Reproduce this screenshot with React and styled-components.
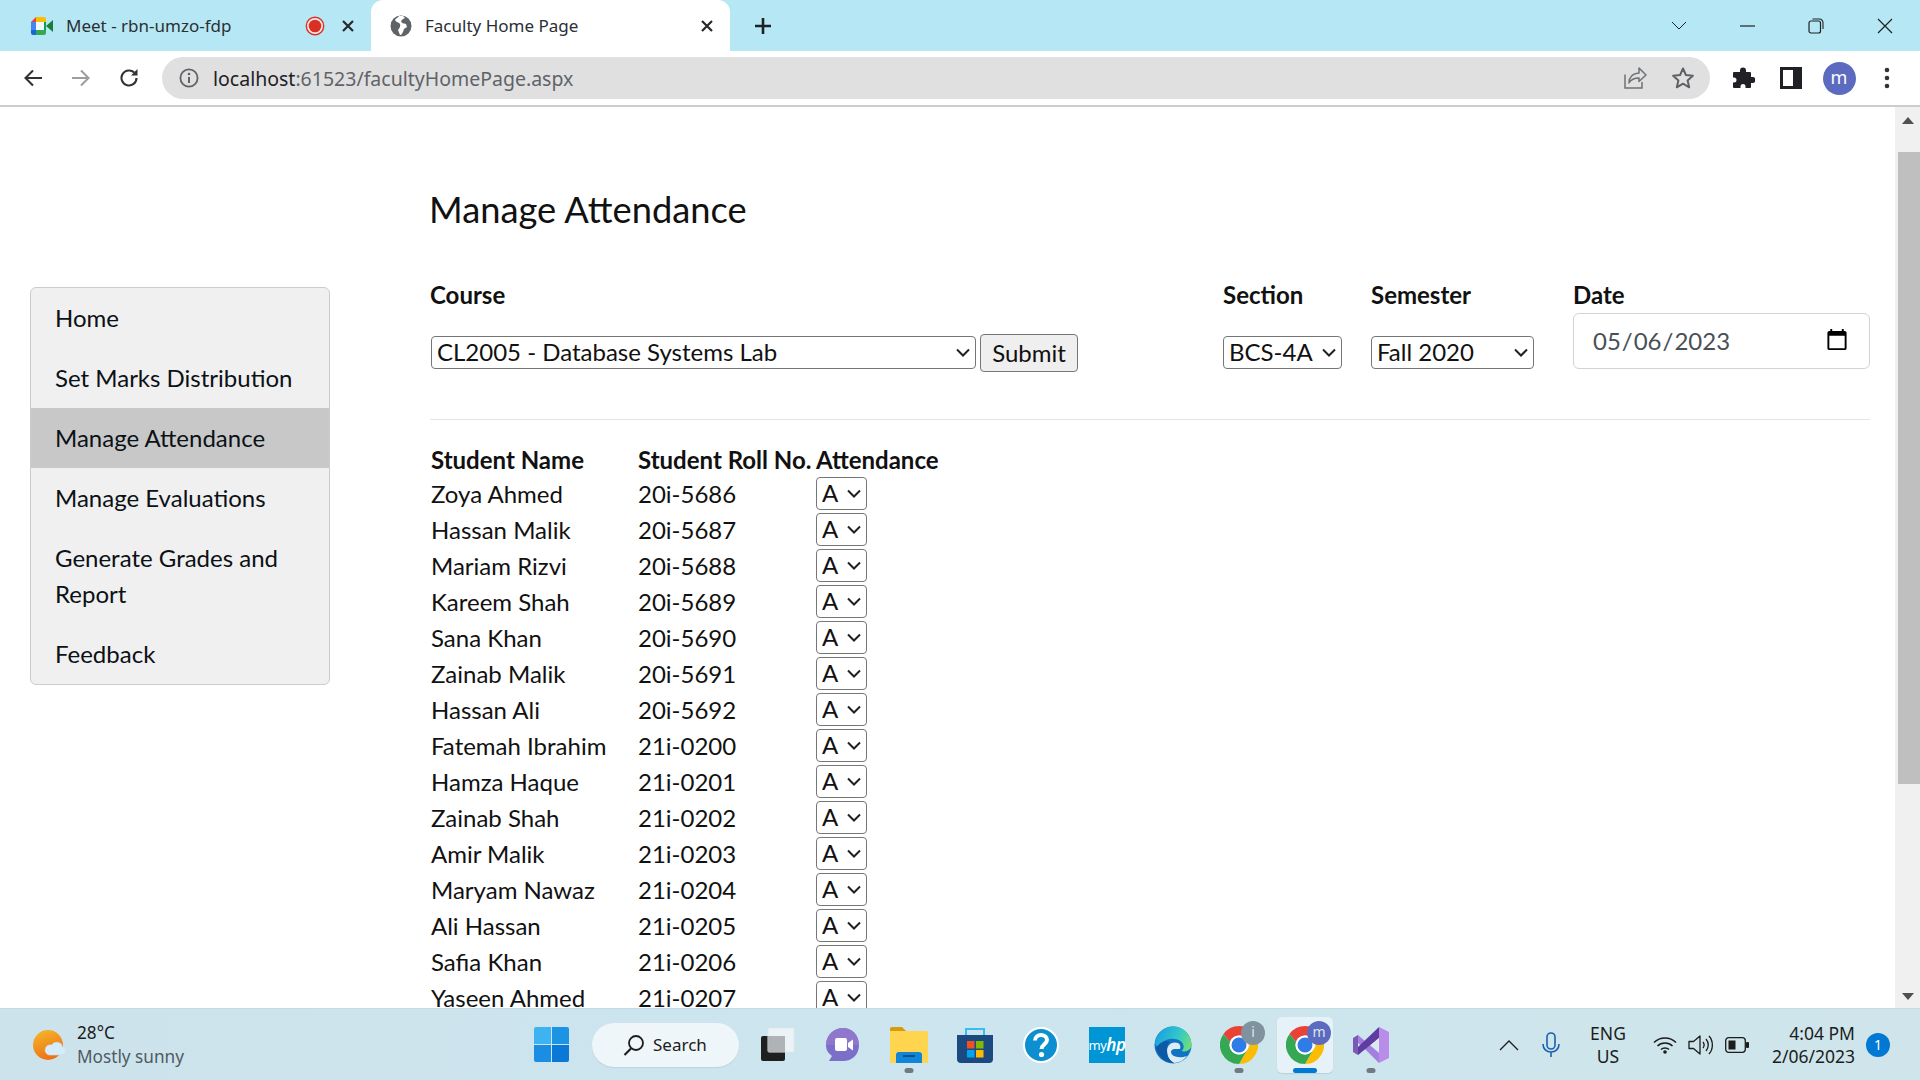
import React from "react";
import styled, { createGlobalStyle } from "styled-components";

const GlobalStyle = createGlobalStyle`
  html, body { margin: 0; padding: 0; height: 100%; overflow: hidden; background: #fff; }
  #root { height: 100%; }
  * { box-sizing: border-box; }
`;

const uiFont = `"Noto Sans", "Open Sans", sans-serif`;
const selectArrow = `url("data:image/svg+xml,%3Csvg xmlns='http://www.w3.org/2000/svg' width='14' height='9'%3E%3Cpath d='M1 1.500l6 6 6-6' fill='none' stroke='%23202124' stroke-width='2'/%3E%3C/svg%3E")`;

const Screen = styled.div`
  height: 100vh;
  display: flex;
  flex-direction: column;
  font-family: Lato, sans-serif;
  color: #111;
`;

/* browser chrome */
const TabStrip = styled.div`
  height: 51px;
  flex: none;
  display: flex;
  align-items: stretch;
  background: #b5e8f4;
  font-family: ${uiFont};
`;
const Tab = styled.div`
  width: ${p => p.$width}px;
  display: flex;
  align-items: center;
  padding: 0 16px 0 ${p => p.$left}px;
  border-radius: 12px 12px 0 0;
  background: ${p => (p.$active ? "#fff" : "transparent")};
  font-size: 17px;
  color: #2b2f33;
`;
const TabTitle = styled.span`
  margin-left: 13px;
  flex: 1;
`;
const RecordSlot = styled.span`
  display: flex;
  margin-right: 16px;
`;
const NewTab = styled.div`
  width: 66px;
  display: flex;
  align-items: center;
  justify-content: center;
`;
const WindowControls = styled.div`
  margin-left: auto;
  display: flex;
  align-items: center;
  padding-right: 1px;
`;
const WindowButton = styled.div`
  width: 68.5px;
  display: flex;
  justify-content: center;
`;
const Toolbar = styled.div`
  height: 56px;
  flex: none;
  display: flex;
  align-items: center;
  background: #fff;
  border-bottom: 2px solid #cdcdcd;
`;
const NavButton = styled.div`
  width: 48px;
  display: flex;
  justify-content: center;
  &:first-child { margin-left: 9px; }
`;
const AddressBar = styled.div`
  width: 1548px;
  height: 42px;
  margin-left: 9px;
  padding: 0 3px 0 17px;
  display: flex;
  align-items: center;
  border-radius: 21px;
  background: #e0e0e0;
  font-family: ${uiFont};
  font-size: 19.5px;
`;
const Host = styled.span`
  margin-left: 14px;
  color: #202124;
`;
const Path = styled.span`
  color: #5f6368;
  flex: 1;
`;
const BarIcon = styled.div`
  width: 48px;
  display: flex;
  justify-content: center;
`;
const ExtraIcons = styled.div`
  display: flex;
  align-items: center;
  margin-left: 9px;
`;
const Avatar = styled.div`
  width: 33px;
  height: 33px;
  border-radius: 50%;
  background: #5c6bc0;
  color: #fff;
  font-family: ${uiFont};
  font-size: 18px;
  line-height: 30px;
  text-align: center;
`;

/* page */
const Viewport = styled.div`
  flex: 1;
  min-height: 0;
  display: flex;
`;
const Page = styled.div`
  flex: 1;
  min-width: 0;
  overflow: hidden;
  display: flex;
  padding: 0 25px 0 30px;
  font-size: 24px;
`;
const Sidebar = styled.ul`
  width: 300px;
  flex: none;
  align-self: flex-start;
  margin: 180px 100px 0 0;
  padding: 0;
  list-style: none;
  background: #f0f0f0;
  border: 1px solid #ccc;
  border-radius: 6px;
  overflow: hidden;
`;
const NavItem = styled.li`
  padding: 12px 24px;
  line-height: 36px;
  background: ${p => (p.$active ? "#c8c8c8" : "transparent")};
  color: #0c1116;
`;
const Content = styled.main`
  flex: 1;
  min-width: 0;
`;
const Title = styled.h1`
  margin: 0 0 0 -1px;
  padding-top: 81px;
  height: 170px;
  font-size: 36.3px;
  line-height: 42px;
  font-weight: 400;
`;
const FilterRow = styled.div`
  display: grid;
  grid-template-columns: 793px 148px 202px 297px;
  padding-bottom: 47px;
  border-bottom: 1px solid #e4e4e4;
`;
const Field = styled.div`
  height: 95px;
  display: flex;
  flex-direction: column;
  justify-content: space-between;
`;
const FieldLabel = styled.label`
  font-weight: 700;
  line-height: 36px;
`;
const CourseControls = styled.div`
  display: flex;
  align-items: center;
  gap: 4px;
  margin-left: 1px;
`;
const Select = styled.select`
  width: ${p => p.$width}px;
  height: 33px;
  padding: 0 0 2px 5px;
  appearance: none;
  font-family: Lato, sans-serif;
  font-size: 24px;
  color: #111;
  background: #fff ${selectArrow} no-repeat right 5px center;
  border: 1px solid #767676;
  border-radius: 4px;
  margin-bottom: ${p => p.$lift || 0}px;
`;
const SubmitButton = styled.button`
  width: 98px;
  height: 38px;
  padding: 0 0 2px;
  font-family: Lato, sans-serif;
  font-size: 24px;
  color: #111;
  background: #efefef;
  border: 1px solid #767676;
  border-radius: 4px;
`;
const DateInput = styled.input`
  width: 297px;
  height: 57px;
  margin-bottom: 3px;
  padding: 0 18px 2px;
  font-family: Lato, sans-serif;
  font-size: 24px;
  color: #495057;
  background: #fff;
  border: 1px solid #ced4da;
  border-radius: 6px;
`;
const RollTable = styled.div`
  padding-top: 23px;
`;
const RollRow = styled.div`
  display: grid;
  grid-template-columns: 207px 178px 1fr;
  align-items: center;
  height: ${p => (p.$head ? "32px" : "36px")};
  padding-left: 1px;
  font-weight: ${p => (p.$head ? 700 : 400)};
  white-space: nowrap;
`;
const Scrollbar = styled.div`
  width: 25px;
  flex: none;
  display: flex;
  flex-direction: column;
  align-items: flex-end;
  background: #f0f0f0;
`;
const ScrollArrow = styled.div`
  width: 100%;
  height: ${p => (p.$down ? "24px" : "45px")};
  margin-top: ${p => (p.$down ? "auto" : "0")};
  padding-top: ${p => (p.$down ? "0" : "10px")};
  display: flex;
  justify-content: center;
  align-items: ${p => (p.$down ? "center" : "flex-start")};
`;
const ScrollThumb = styled.div`
  width: 22px;
  height: 632px;
  background: #bfbfbf;
`;

/* taskbar */
const Taskbar = styled.footer`
  height: 72px;
  flex: none;
  display: flex;
  align-items: center;
  background: linear-gradient(90deg, #cde3ec, #cce5ee 50%, #cfe5eb);
  border-top: 1px solid #c3dbe2;
  font-family: ${uiFont};
  color: #1c1c1c;
`;
const Weather = styled.div`
  width: 527px;
  padding-left: 32px;
  display: flex;
  align-items: center;
  gap: 11px;
`;
const WeatherText = styled.div`
  padding-top: 1px;
  font-size: 17.2px;
  line-height: 24px;
`;
const Muted = styled.div`
  color: #4e5a60;
`;
const StartButton = styled.div`
  width: 48px;
  display: flex;
  justify-content: center;
`;
const SearchPill = styled.div`
  width: 147px;
  height: 44px;
  margin-left: 17px;
  padding-left: 31px;
  display: flex;
  align-items: center;
  gap: 8px;
  border-radius: 22px;
  background: #eef6f9;
  box-shadow: 0 1px 1px #bcd3da;
  font-size: 17px;
`;
const AppSlot = styled.div`
  position: relative;
  width: 66px;
  height: 56px;
  display: flex;
  align-items: center;
  justify-content: center;
  ${SearchPill} + & { margin-left: 5px; }
`;
const ActiveBox = styled.div`
  position: absolute;
  inset: 0 5px;
  background: #e6f2f7;
  border-radius: 5px;
  box-shadow: 0 1px 1px #b8d0d8;
`;
const IconLayer = styled.div`
  position: relative;
  display: flex;
`;
const RunDot = styled.div`
  position: absolute;
  bottom: 0;
  left: 50%;
  transform: translateX(-50%);
  width: ${p => (p.$active ? "24px" : "9px")};
  height: 5px;
  border-radius: 3px;
  background: ${p => (p.$active ? "#0078d4" : "#707a80")};
`;
const AppBadge = styled.div`
  position: absolute;
  top: 4px;
  right: 7px;
  width: 24px;
  height: 24px;
  border-radius: 50%;
  background: ${p => p.$bg};
  color: #dfe6ea;
  font-size: 14px;
  line-height: 22px;
  text-align: center;
`;
const HpTile = styled.div`
  width: 36px;
  height: 36px;
  display: flex;
  align-items: center;
  justify-content: center;
  background: #0096d6;
  color: #fff;
  font-size: 13px;
  letter-spacing: -0.5px;
`;
const HpItalic = styled.span`
  font-size: 17px;
  font-style: italic;
  font-weight: 600;
`;
const Tray = styled.div`
  margin-left: auto;
  display: flex;
  align-items: center;
  padding-right: 30px;
  font-size: 17.5px;
  line-height: 23px;
`;
const TrayIcon = styled.div`
  width: ${p => p.$width || 36}px;
  display: flex;
  justify-content: center;
`;
const LangBlock = styled.div`
  width: 72px;
  margin-right: 6px;
  text-align: center;
`;
const ClockBlock = styled.div`
  width: 100px;
  margin-left: 3px;
  text-align: right;
`;
const NotifyBadge = styled.div`
  width: 24px;
  height: 24px;
  margin-left: 11px;
  border-radius: 50%;
  background: #0078d4;
  color: #fff;
  font-size: 14px;
  line-height: 24px;
  text-align: center;
`;

const Ico = ({ s = 24, w, h, vb, children, ...rest }) => (
  <svg width={w || s} height={h || s} viewBox={vb || `0 0 ${w || s} ${h || s}`} fill="none" {...rest}>
    {children}
  </svg>
);

const MeetIcon = () => (
  <Ico w={22} h={18}>
    <path d="M5 0h8a2 2 0 0 1 2 2v3H5z" fill="#fbbc04" />
    <path d="M0 5l5-5v5z" fill="#ea4335" />
    <path d="M0 5h5v8H0z" fill="#4285f4" />
    <path d="M0 13h5v5H2a2 2 0 0 1-2-2z" fill="#1967d2" />
    <path d="M5 13h10v3a2 2 0 0 1-2 2H5z" fill="#34a853" />
    <path d="M13 5h2v8h-2z" fill="#0f9d58" />
    <path d="M15 9l7-6v12z" fill="#188038" />
    <rect x="5" y="5" width="8" height="8" fill="#eef7fb" />
  </Ico>
);
const RecordIcon = () => (
  <Ico s={20}>
    <circle cx="10" cy="10" r="8.7" stroke="#d93025" strokeWidth="1.4" fill="#fde8e6" />
    <circle cx="10" cy="10" r="6.3" fill="#d93025" />
  </Ico>
);
const CloseIcon = () => (
  <Ico s={14}>
    <path d="M2 2l10 10M12 2 2 12" stroke="#26282b" strokeWidth="2.2" />
  </Ico>
);
const GlobeIcon = () => (
  <Ico s={22}>
    <circle cx="11" cy="11" r="10.5" fill="#5f6368" />
    <path d="M9 1c-1 2-3 2-4 4 1 2 3 2 4 3 2 1 1 3 1 4l-2 3 2 5c2 0 2-2 3-3l1-3 3-2-1-3-4-1-1-2 2-2 2-1-2-2z" fill="#fff" />
  </Ico>
);
const PlusIcon = () => (
  <Ico s={20}>
    <path d="M10 2v16M2 10h16" stroke="#202124" strokeWidth="2.6" />
  </Ico>
);
const ChevronDownThin = () => (
  <Ico w={16} h={10}>
    <path d="M1 1l7 7 7-7" stroke="#202124" strokeWidth="1" />
  </Ico>
);
const MinIcon = () => (
  <Ico w={16} h={10}>
    <path d="M0 5h15" stroke="#202124" strokeWidth="1.2" />
  </Ico>
);
const RestoreIcon = () => (
  <Ico s={16}>
    <rect x="1" y="3" width="11.5" height="12" rx="2" stroke="#202124" strokeWidth="1.2" />
    <path d="M4.5 1h7a3.5 3.5 0 0 1 3.5 3.5V11" stroke="#202124" strokeWidth="1.1" />
  </Ico>
);
const WinCloseIcon = () => (
  <Ico s={16}>
    <path d="M1 1l14 14M15 1 1 15" stroke="#202124" strokeWidth="1.2" />
  </Ico>
);
const BackIcon = ({ color = "#303336" }) => (
  <Ico s={22}>
    <path d="M20 11H4M11 3.500 3.500 11l7.500 7.500" stroke={color} strokeWidth="2.1" />
  </Ico>
);
const ForwardIcon = () => (
  <Ico s={22}>
    <path d="M2 11h16M11 3.500l7.500 7.500-7.500 7.500" stroke="#9a9ea2" strokeWidth="2.1" />
  </Ico>
);
const ReloadIcon = () => (
  <Ico s={22}>
    <path d="M18.500 11a7.500 7.500 0 1 1-2.300-5.400" stroke="#303336" strokeWidth="2.1" />
    <path d="M19.500 2v6.500H13z" fill="#303336" />
  </Ico>
);
const InfoIcon = () => (
  <Ico s={20}>
    <circle cx="10" cy="10" r="8.600" stroke="#5f6368" strokeWidth="1.800" />
    <path d="M10 9v6" stroke="#5f6368" strokeWidth="2" />
    <circle cx="10" cy="6" r="1.300" fill="#5f6368" />
  </Ico>
);
const ShareIcon = () => (
  <Ico s={24}>
    <path d="M2 8.500V22h17v-6" stroke="#6e7276" strokeWidth="1.500" />
    <path d="M16 2l7 7-7 6.500V12c-5 0-8 1.500-10 5 0-6 4-9.500 10-10z" stroke="#6e7276" strokeWidth="1.500" strokeLinejoin="round" />
  </Ico>
);
const StarIcon = () => (
  <Ico s={24}>
    <path d="M12 2.500l2.900 6.500 7 .7-5.300 4.700 1.600 6.900-6.200-3.600-6.200 3.600 1.600-6.900-5.300-4.700 7-.7z" stroke="#5f6368" strokeWidth="2" strokeLinejoin="round" />
  </Ico>
);
const PuzzleIcon = () => (
  <Ico s={24}>
    <path d="M9 4.500a3 3 0 0 1 6 0V6h4a1 1 0 0 1 1 1v4h1.500a3 3 0 0 1 0 6H20v4a1 1 0 0 1-1 1h-4.500v-1.500a2.500 2.500 0 0 0-5 0V22H3a1 1 0 0 1-1-1v-4.500h1a2.500 2.500 0 0 0 0-5H2V7a1 1 0 0 1 1-1h6z" fill="#202124" />
  </Ico>
);
const PanelIcon = () => (
  <Ico s={22}>
    <rect x="1.500" y="1.500" width="19" height="19" stroke="#202124" strokeWidth="3" />
    <rect x="13" y="2" width="7" height="18" fill="#202124" />
  </Ico>
);
const DotsIcon = () => (
  <Ico w={6} h={22}>
    <circle cx="3" cy="3" r="2.300" fill="#303336" />
    <circle cx="3" cy="11" r="2.300" fill="#303336" />
    <circle cx="3" cy="19" r="2.300" fill="#303336" />
  </Ico>
);
const ArrowTri = ({ down }) => (
  <Ico w={12} h={7}>
    <path d={down ? "M0 0h12L6 7z" : "M0 7h12L6 0z"} fill="#505050" />
  </Ico>
);

const WeatherIcon = () => (
  <Ico s={34}>
    <defs>
      <linearGradient id="sun" x1="0.200" y1="0" x2="0.600" y2="1">
        <stop offset="0" stopColor="#f6b52a" />
        <stop offset="1" stopColor="#ec6f12" />
      </linearGradient>
    </defs>
    <circle cx="16" cy="17" r="15" fill="url(#sun)" />
    <path d="M17 27h12.500a4 4 0 0 0 1-7.900 6 6 0 0 0-11-2.100 5 5 0 0 0-2.500 10z" fill="#d6ecfb" stroke="#bfe0f7" strokeWidth=".6" />
  </Ico>
);
const WindowsIcon = () => (
  <Ico s={35}>
    <path d="M0 2a2 2 0 0 1 2-2h15v17H0z" fill="#3db3f2" />
    <path d="M18 0h15a2 2 0 0 1 2 2v15H18z" fill="#1d93e4" />
    <path d="M0 18h17v17H2a2 2 0 0 1-2-2z" fill="#1a8ee2" />
    <path d="M18 18h17v15a2 2 0 0 1-2 2H18z" fill="#0a78d6" />
  </Ico>
);
const SearchIcon = () => (
  <Ico s={22}>
    <circle cx="13" cy="9" r="7" stroke="#1c1c1c" strokeWidth="1.800" />
    <path d="M8 14.500 1.500 21" stroke="#1c1c1c" strokeWidth="2.200" />
  </Ico>
);
const TaskViewIcon = () => (
  <Ico s={36}>
    <rect x="2" y="9" width="24" height="25" rx="2" fill="#1f1f1f" />
    <rect x="9" y="1" width="26" height="24" rx="1" fill="#f3f6f7" fillOpacity=".8" stroke="#dfe7ea" />
    <rect x="9" y="9" width="17" height="16" fill="#a9adaf" fillOpacity=".8" />
  </Ico>
);
const TeamsIcon = () => (
  <Ico s={36}>
    <path d="M18 1c9 0 16 7 16 17s-7 16-16 16H4l3-5C3 26 1 23 1 18 1 8 9 1 18 1z" fill="#7b6fc9" />
    <path d="M18 1c9 0 16 7 16 17H1C1 8 9 1 18 1z" fill="#9a7ad0" fillOpacity=".7" />
    <rect x="10" y="11" width="12" height="13" rx="2" fill="#fff" />
    <path d="M23 16l5-3.500v11L23 20z" fill="#fff" />
  </Ico>
);
const FolderIcon = () => (
  <Ico w={38} h={36}>
    <path d="M0 2a2 2 0 0 1 2-2h10l4 4H0z" fill="#d69c09" />
    <path d="M0 4h36a2 2 0 0 1 2 2v30H0z" fill="#ffd44f" />
    <path d="M6 36v-8a3 3 0 0 1 3-3h20a3 3 0 0 1 3 3v8z" fill="#1186d8" />
    <path d="M13 29h12" stroke="#0a4f8f" strokeWidth="2" />
  </Ico>
);
const StoreIcon = () => (
  <Ico s={36}>
    <path d="M9 8V2h18v6" stroke="#38bdf0" strokeWidth="2" />
    <path d="M0 8h36v24a4 4 0 0 1-4 4H4a4 4 0 0 1-4-4z" fill="#1b4a80" />
    <rect x="10" y="14" width="7.500" height="7.500" fill="#f25022" />
    <rect x="19" y="14" width="7.500" height="7.500" fill="#7fba00" />
    <rect x="10" y="23" width="7.500" height="7.500" fill="#00a4ef" />
    <rect x="19" y="23" width="7.500" height="7.500" fill="#ffb900" />
  </Ico>
);
const HelpIcon = () => (
  <Ico s={36}>
    <circle cx="18" cy="18" r="17" fill="#0c8fd0" stroke="#fff" strokeWidth="2" />
    <path d="M12 13.500c0-3.500 3-5.500 6-5.500s6 2 6 5c0 4-5.500 4.500-5.500 9" stroke="#fff" strokeWidth="4" />
    <circle cx="18.500" cy="27.500" r="2.600" fill="#fff" />
  </Ico>
);
const EdgeIcon = () => (
  <Ico s={38}>
    <defs>
      <linearGradient id="edgeTop" x1="0" y1="0.300" x2="1" y2="0.600">
        <stop offset="0" stopColor="#1b9de2" />
        <stop offset="0.600" stopColor="#30c8c9" />
        <stop offset="1" stopColor="#6fdc7c" />
      </linearGradient>
    </defs>
    <circle cx="19" cy="19" r="18.500" fill="#1173c4" />
    <path d="M.8 17C3 6 11 .5 19 .5c10 0 18 7 18.500 18 .2 5-5 8-10 6.500 3-2 3-7-1-10-6-4-17-3-21 5-1 2-2.700 1-4.700-3z" fill="url(#edgeTop)" />
    <path d="M13 25c0-7 6-10 11-8 2 1 3 3 2 6-3 0-9-1-9 3s7 7 16 4c-4 5-9 7-14 7-4-3-6-7-6-12z" fill="#dcedf4" />
    <path d="M13 25c0 6 3 10 8 12-9 0-17-6-19-15 3-5 9-8 14-6-3 2-3 5-3 9z" fill="#0c5aa6" />
  </Ico>
);
const ChromeIcon = () => (
  <Ico s={38}>
    <path d="M19 0a19 19 0 0 1 16.500 9.500H19a9.500 9.500 0 0 0-9 6.500L3.500 8A19 19 0 0 1 19 0z" fill="#ea4335" />
    <path d="M35.500 9.500A19 19 0 0 1 19 38l8.200-14.200a9.500 9.500 0 0 0-1-14.300z" fill="#fbbc04" />
    <path d="M3.500 8A19 19 0 0 0 19 38l8.200-14.200A9.500 9.500 0 0 1 10 16z" fill="#34a853" />
    <circle cx="19" cy="19" r="9.500" fill="#fff" />
    <circle cx="19" cy="19" r="7.500" fill="#2f7be8" />
  </Ico>
);
const VsIcon = () => (
  <Ico s={36}>
    <path d="M0 11l5-3v20l-5-3z" fill="#7a5ab5" />
    <path d="M5 8l21 18v10L11 21l-6-5z" fill="#a47fdf" />
    <path d="M26 0v11L5 28v-8z" fill="#5f3c9f" />
    <path d="M26 0l10 5v26l-10 5z" fill="#b98cea" />
    <path d="M26 11l-8 7 8 7z" fill="#dbe9f0" />
  </Ico>
);
const TrayChevron = () => (
  <Ico w={20} h={12}>
    <path d="M1 11l9-9 9 9" stroke="#1c1c1c" strokeWidth="1.300" />
  </Ico>
);
const MicIcon = () => (
  <Ico w={18} h={26}>
    <rect x="5" y="1" width="8" height="16" rx="4" stroke="#1b5fb0" strokeWidth="1.600" />
    <path d="M1 12c0 5 3.500 8 8 8s8-3 8-8M9 20v5" stroke="#1b5fb0" strokeWidth="1.600" />
  </Ico>
);
const WifiIcon = () => (
  <Ico w={24} h={18}>
    <path d="M1 6.500c6-6 16-6 22 0M4.500 10c4-4 11-4 15 0M8 13.500c2-2 6-2 8 0" stroke="#1c1c1c" strokeWidth="1.500" />
    <circle cx="12" cy="16" r="1.800" fill="#1c1c1c" />
  </Ico>
);
const VolumeIcon = () => (
  <Ico w={26} h={22}>
    <path d="M1 7.500h4.500L12 2v18l-6.500-5.500H1z" stroke="#1c1c1c" strokeWidth="1.300" strokeLinejoin="round" />
    <path d="M15 8c1.500 2 1.500 4 0 6M18 5c3 3.500 3 8.500 0 12M21 2c4.500 5 4.500 13 0 18" stroke="#1c1c1c" strokeWidth="1.300" />
  </Ico>
);
const BatteryIcon = () => (
  <Ico w={24} h={16}>
    <rect x=".7" y=".7" width="19.600" height="14.600" rx="3" stroke="#1c1c1c" strokeWidth="1.300" />
    <rect x="3.500" y="3.500" width="7" height="9" fill="#1c1c1c" />
    <rect x="21" y="5" width="3" height="6" rx="1" fill="#1c1c1c" />
  </Ico>
);

const navItems = [
  "Home",
  "Set Marks Distribution",
  "Manage Attendance",
  "Manage Evaluations",
  "Generate Grades and Report",
  "Feedback",
];

const students = [
  ["Zoya Ahmed", "20i-5686"],
  ["Hassan Malik", "20i-5687"],
  ["Mariam Rizvi", "20i-5688"],
  ["Kareem Shah", "20i-5689"],
  ["Sana Khan", "20i-5690"],
  ["Zainab Malik", "20i-5691"],
  ["Hassan Ali", "20i-5692"],
  ["Fatemah Ibrahim", "21i-0200"],
  ["Hamza Haque", "21i-0201"],
  ["Zainab Shah", "21i-0202"],
  ["Amir Malik", "21i-0203"],
  ["Maryam Nawaz", "21i-0204"],
  ["Ali Hassan", "21i-0205"],
  ["Safia Khan", "21i-0206"],
  ["Yaseen Ahmed", "21i-0207"],
];

export default function App() {
  return (
    <Screen>
      <GlobalStyle />
      <TabStrip>
        <Tab $width={371} $left={31}>
          <MeetIcon />
          <TabTitle>Meet - rbn-umzo-fdp</TabTitle>
          <RecordSlot><RecordIcon /></RecordSlot>
          <CloseIcon />
        </Tab>
        <Tab $width={359} $left={19} $active>
          <GlobeIcon />
          <TabTitle>Faculty Home Page</TabTitle>
          <CloseIcon />
        </Tab>
        <NewTab>
          <PlusIcon />
        </NewTab>
        <WindowControls>
          <WindowButton><ChevronDownThin /></WindowButton>
          <WindowButton><MinIcon /></WindowButton>
          <WindowButton><RestoreIcon /></WindowButton>
          <WindowButton><WinCloseIcon /></WindowButton>
        </WindowControls>
      </TabStrip>
      <Toolbar>
        <NavButton><BackIcon /></NavButton>
        <NavButton><ForwardIcon /></NavButton>
        <NavButton><ReloadIcon /></NavButton>
        <AddressBar>
          <InfoIcon />
          <Host>localhost</Host>
          <Path>:61523/facultyHomePage.aspx</Path>
          <BarIcon><ShareIcon /></BarIcon>
          <BarIcon><StarIcon /></BarIcon>
        </AddressBar>
        <ExtraIcons>
          <BarIcon><PuzzleIcon /></BarIcon>
          <BarIcon><PanelIcon /></BarIcon>
          <BarIcon><Avatar>m</Avatar></BarIcon>
          <BarIcon><DotsIcon /></BarIcon>
        </ExtraIcons>
      </Toolbar>

      <Viewport>
        <Page>
          <Sidebar>
            {navItems.map(item => (
              <NavItem key={item} $active={item === "Manage Attendance"}>
                {item}
              </NavItem>
            ))}
          </Sidebar>
          <Content>
            <Title>Manage Attendance</Title>
            <FilterRow>
              <Field>
                <FieldLabel>Course</FieldLabel>
                <CourseControls>
                  <Select $width={545} $lift={1} defaultValue="CL2005">
                    <option value="CL2005">CL2005 - Database Systems Lab</option>
                  </Select>
                  <SubmitButton type="button">Submit</SubmitButton>
                </CourseControls>
              </Field>
              <Field>
                <FieldLabel>Section</FieldLabel>
                <Select $width={119} $lift={3}>
                  <option>BCS-4A</option>
                </Select>
              </Field>
              <Field>
                <FieldLabel>Semester</FieldLabel>
                <Select $width={163} $lift={3}>
                  <option>Fall 2020</option>
                </Select>
              </Field>
              <Field>
                <FieldLabel>Date</FieldLabel>
                <DateInput type="date" defaultValue="2023-05-06" />
              </Field>
            </FilterRow>
            <RollTable>
              <RollRow $head>
                <span>Student Name</span>
                <span>Student Roll No.</span>
                <span>Attendance</span>
              </RollRow>
              {students.map(([name, roll]) => (
                <RollRow key={roll}>
                  <span>{name}</span>
                  <span>{roll}</span>
                  <Select $width={51}>
                    <option>A</option>
                  </Select>
                </RollRow>
              ))}
            </RollTable>
          </Content>
        </Page>
        <Scrollbar>
          <ScrollArrow><ArrowTri /></ScrollArrow>
          <ScrollThumb />
          <ScrollArrow $down><ArrowTri down /></ScrollArrow>
        </Scrollbar>
      </Viewport>

      <Taskbar>
        <Weather>
          <WeatherIcon />
          <WeatherText>
            <div>28°C</div>
            <Muted>Mostly sunny</Muted>
          </WeatherText>
        </Weather>
        <StartButton><WindowsIcon /></StartButton>
        <SearchPill>
          <SearchIcon />
          Search
        </SearchPill>
        <AppSlot><TaskViewIcon /></AppSlot>
        <AppSlot><TeamsIcon /></AppSlot>
        <AppSlot><FolderIcon /><RunDot /></AppSlot>
        <AppSlot><StoreIcon /></AppSlot>
        <AppSlot><HelpIcon /></AppSlot>
        <AppSlot>
          <HpTile>my<HpItalic>hp</HpItalic></HpTile>
        </AppSlot>
        <AppSlot><EdgeIcon /></AppSlot>
        <AppSlot>
          <ChromeIcon />
          <AppBadge $bg="#7f929e">i</AppBadge>
          <RunDot />
        </AppSlot>
        <AppSlot>
          <ActiveBox />
          <IconLayer><ChromeIcon /></IconLayer>
          <AppBadge $bg="#5c6bc0">m</AppBadge>
          <RunDot $active />
        </AppSlot>
        <AppSlot><VsIcon /><RunDot /></AppSlot>
        <Tray>
          <TrayIcon $width={42}><TrayChevron /></TrayIcon>
          <TrayIcon $width={42}><MicIcon /></TrayIcon>
          <LangBlock>ENG<br />US</LangBlock>
          <TrayIcon $width={30}><WifiIcon /></TrayIcon>
          <TrayIcon $width={42}><VolumeIcon /></TrayIcon>
          <TrayIcon $width={30}><BatteryIcon /></TrayIcon>
          <ClockBlock>4:04 PM<br />2/06/2023</ClockBlock>
          <NotifyBadge>1</NotifyBadge>
        </Tray>
      </Taskbar>
    </Screen>
  );
}
